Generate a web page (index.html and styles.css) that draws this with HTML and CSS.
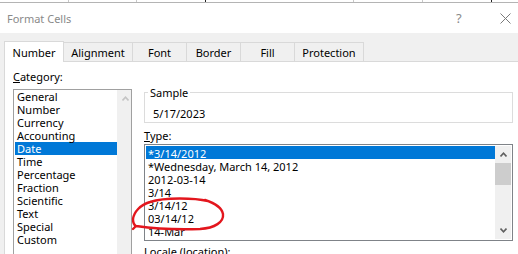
FILE: index.html
```html
<!DOCTYPE html>
<html lang="en">
<head>
  <meta charset="UTF-8" />
  <title>Format Cells</title>
  <link rel="stylesheet" href="styles.css">
</head>
<body>
  <div class="sheet">
    <div class="cell w69"></div>
    <div class="cell w68"><span>1/13/2023</span></div>
    <div class="cell w69 dark"></div>
    <div class="cell w148"></div>
    <div class="cell w69"><span>1/13/2023</span></div>
    <div class="cell w69 dark"></div>
    <div class="cell"></div>
  </div>

  <div class="dialog">
    <div class="titlebar">
      <span class="title">Format Cells</span>
      <span class="help">?</span>
      <span class="close">
        <svg width="11" height="11" viewBox="0 0 11 11">
          <path d="M0.5 0.5 L10.5 10.5 M10.5 0.5 L0.5 10.5" stroke="#7a7a7a" stroke-width="1" fill="none"/>
        </svg>
      </span>
    </div>

    <div class="tabs">
      <div class="tab active w60">Number</div>
      <div class="tab w69">Alignment</div>
      <div class="tab w54">Font</div>
      <div class="tab w54">Border</div>
      <div class="tab w54">Fill</div>
      <div class="tab w69 last">Protection</div>
    </div>

    <div class="panel">
      <div class="col-left">
        <div class="label"><u>C</u>ategory:</div>
        <div class="list category">
          <div class="items">
            <div class="row">General</div>
            <div class="row">Number</div>
            <div class="row">Currency</div>
            <div class="row">Accounting</div>
            <div class="row selected">Date</div>
            <div class="row">Time</div>
            <div class="row">Percentage</div>
            <div class="row">Fraction</div>
            <div class="row">Scientific</div>
            <div class="row">Text</div>
            <div class="row">Special</div>
            <div class="row">Custom</div>
          </div>
          <div class="scroll">
            <div class="arrow">
              <svg width="7" height="5" viewBox="0 0 7 5"><polyline points="0.5,4.5 3.5,1.2 6.5,4.5" fill="none" stroke="#c4c4c4" stroke-width="1.6"/></svg>
            </div>
          </div>
        </div>
      </div>

      <div class="col-right">
        <fieldset class="sample">
          <legend>Sample</legend>
          <div class="sample-value">5/17/2023</div>
        </fieldset>

        <div class="label type-label"><u>T</u>ype:</div>
        <div class="list type">
          <div class="items">
            <div class="row selected">*3/14/2012</div>
            <div class="row">*Wednesday, March 14, 2012</div>
            <div class="row">2012-03-14</div>
            <div class="row">3/14</div>
            <div class="row">3/14/12</div>
            <div class="row">03/14/12</div>
            <div class="row">14-Mar</div>
          </div>
          <div class="scroll">
            <div class="arrow">
              <svg width="7" height="5" viewBox="0 0 7 5"><polyline points="0.5,4.5 3.5,1.2 6.5,4.5" fill="none" stroke="#606060" stroke-width="1.6"/></svg>
            </div>
            <div class="thumb"></div>
            <div class="track"></div>
            <div class="arrow">
              <svg width="7" height="5" viewBox="0 0 7 5"><polyline points="0.5,0.5 3.5,3.8 6.5,0.5" fill="none" stroke="#606060" stroke-width="1.6"/></svg>
            </div>
          </div>
        </div>

        <div class="label locale-label"><u>L</u>ocale (location):</div>
      </div>
    </div>
  </div>

  <!-- red pen mark drawn over the list -->
  <svg class="markup" width="518" height="254" viewBox="0 0 518 254">
    <path d="M208 201 C195 198 165 197 150 202 C140 205 134 212 133 219 C133 223 134 225 136 226 L133 229 M136 226 C150 228 175 230 200 229 C215 228 224 222 223 214 C222 208 214 203 205 200"
          fill="none" stroke="#e3161d" stroke-width="2.4" stroke-linecap="round" stroke-linejoin="round"/>
  </svg>
</body>
</html>
```

FILE: styles.css
```css
body {
  margin: 0;
  width: 518px;
  height: 254px;
  overflow: hidden;
  position: relative;
  background: #f0f0f0;
  color: #000;
  font-family: 'Segoe UI', 'Noto Sans', sans-serif;
  font-size: 11px;
}

/* sliver of the spreadsheet behind the dialog */
.sheet {
  display: flex;
  height: 2px;
  overflow: hidden;
  background: #fff;
}
.cell {
  flex: none;
  border-right: 1px solid #c8c8c8;
  box-sizing: border-box;
}
.cell:last-child {
  flex: 1;
  border: none;
}
.cell.dark {
  border-right-color: #222;
}
.cell span {
  display: block;
  margin-top: -10px;
  padding-right: 10px;
  line-height: 12px;
  font-size: 11px;
  text-align: right;
  color: #1f3b6b;
}
.w60 { width: 60px; }
.w68 { width: 68px; }
.w69 { width: 69px; }
.w54 { width: 54px; }
.w148 { width: 148px; }

.dialog {
  border-top: 1px solid #b4b4b4;
}

.titlebar {
  height: 30px;
  background: #fff;
  display: flex;
  align-items: center;
  padding-left: 7px;
  color: #8a8a8a;
}
.title {
  flex: 1;
}
.help {
  width: 44px;
  font-size: 13px;
  color: #8a8a8a;
}
.close {
  width: 18px;
  height: 11px;
  display: flex;
}

.tabs {
  display: flex;
  align-items: flex-end;
  padding: 8px 0 0 4px;
  position: relative;
  z-index: 1;
}
.tab {
  box-sizing: border-box;
  height: 19px;
  border-top: 1px solid #d9d9d9;
  border-left: 1px solid #d9d9d9;
  display: flex;
  align-items: center;
  justify-content: center;
  background: #f0f0f0;
}
.tab.last {
  width: 70px;
  border-right: 1px solid #d9d9d9;
}
.tab.active {
  height: 21px;
  margin-bottom: -1px;
  background: #fff;
  border-right: 1px solid #d9d9d9;
  margin-right: -1px;
}

.panel {
  display: flex;
  gap: 12px;
  margin-left: 4px;
  height: 200px;
  padding: 8px 0 0 8px;
  background: #fff;
  border-top: 1px solid #d9d9d9;
  border-left: 1px solid #d9d9d9;
}

.label {
  height: 13px;
  line-height: 13px;
}
.col-left {
  width: 119px;
}
.col-left .label {
  margin-bottom: 6px;
}
.col-right {
  width: 369px;
}

.list {
  display: flex;
  border: 1px solid #a0a0a0;
  background: #fff;
}
.list .items {
  flex: 1;
}
.row {
  height: 13px;
  line-height: 13px;
  padding-left: 2px;
  white-space: nowrap;
}
.row.selected {
  background: #0078d7;
  color: #fff;
}
.scroll {
  display: flex;
  flex-direction: column;
  background: #f0f0f0;
}
.arrow {
  height: 17px;
  display: flex;
  align-items: center;
  justify-content: center;
}

.category {
  height: 200px;
  padding-left: 1px;
}
.category .scroll {
  width: 14px;
}
.category .arrow {
  height: 16px;
  justify-content: flex-end;
  padding-right: 2px;
}

.sample {
  margin: 16px 0 0;
  padding: 0 0 2px 3px;
  border: 1px solid #dcdcdc;
  min-width: 0;
}
.sample legend {
  padding: 0 2px;
  line-height: 13px;
}
.sample-value {
  margin-top: 8px;
  padding-left: 5px;
  line-height: 13px;
}

.type-label {
  margin: 6px 0 2px;
}
.type {
  height: 93px;
  padding: 1px;
  border-color: #7f8388;
}
.type .row {
  line-height: 16px;
}
.type .scroll {
  width: 16px;
}
.thumb {
  height: 22px;
  background: #cdcdcd;
}
.track {
  flex: 1;
}
.locale-label {
  margin-top: 4px;
}

.markup {
  position: absolute;
  left: 0;
  top: 0;
  pointer-events: none;
}
```
